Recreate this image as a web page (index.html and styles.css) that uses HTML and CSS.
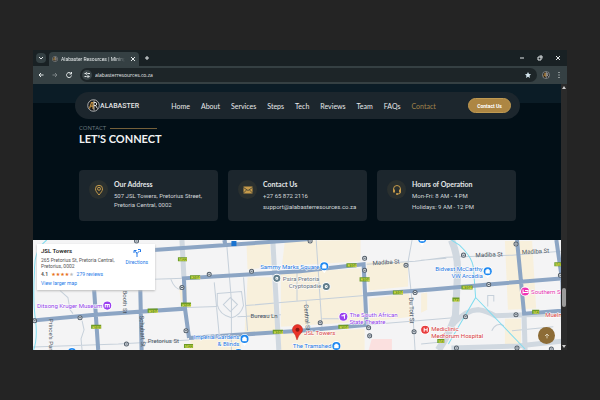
FILE: index.html
```html
<!DOCTYPE html>
<html lang="en">
<head>
<meta charset="utf-8">
<title>Alabaster Resources | Contact</title>
<link rel="stylesheet" href="styles.css">
</head>
<body>

<svg width="0" height="0" class="defs">
	<defs>
		<symbol id="mark" viewBox="0 0 26 26">
			<circle cx="13" cy="13" r="11.5" fill="#17191b" stroke="#dcdcdc" stroke-width="1.5"/>
			<path d="M5 19 L9 7 H12 V20 M7 14 H12" fill="none" stroke="#c08f42" stroke-width="2.5"/>
			<path d="M14 3 V23" fill="none" stroke="#eee" stroke-width="1.5"/>
			<path d="M14 7 H18 Q21 10 18 13 H14 M17 13 L21 19" fill="none" stroke="#ddd" stroke-width="2"/>
		</symbol>
		<symbol id="stop" viewBox="0 0 6 6">
			<circle cx="3" cy="3" r="2" fill="#e8edf2" stroke="#56616c" stroke-width="1"/>
			<path d="M2 3 H4" stroke="#56616c" stroke-width="1"/>
		</symbol>
		<symbol id="shop" viewBox="0 0 10 12">
			<path d="M5 12 L2 8 A4.5 4.5 0 1 1 8 8 Z" fill="#fff"/>
			<circle cx="5" cy="5" r="4" fill="#1a86f0"/>
			<path d="M3 4 H7 V7 H3 Z M4 4 V3 H6 V4" fill="#fff" stroke="#fff" stroke-width=".5"/>
		</symbol>
	</defs>
</svg>

<div class="window">
	<div class="tabs">
		<button class="tab-menu" aria-label="Search tabs"><svg viewBox="0 0 10 10"><path d="M3 4 L5 6 L7 4"/></svg></button>
		<div class="tab">
			<svg class="tab-icon"><use href="#mark"/></svg>
			<span class="tab-title">Alabaster Resources | Mining E</span>
			<button aria-label="Close tab"><svg viewBox="0 0 10 10"><path d="M3 3 L7 7 M7 3 L3 7"/></svg></button>
		</div>
		<button class="new-tab" aria-label="New tab"><svg viewBox="0 0 10 10"><path d="M5 3 V7 M3 5 H7"/></svg></button>
		<div class="window-buttons">
			<button aria-label="Minimize"><svg viewBox="0 0 10 10"><path d="M3 5 H7"/></svg></button>
			<button aria-label="Restore"><svg viewBox="0 0 10 10"><path d="M3 4 H6 V7 H3 Z M4.500 3 H7 V5.500"/></svg></button>
			<button aria-label="Close"><svg viewBox="0 0 10 10"><path d="M3 3 L7 7 M7 3 L3 7"/></svg></button>
		</div>
	</div>
	<div class="toolbar">
		<button aria-label="Back"><svg viewBox="0 0 10 10"><path d="M7.500 5 H3 M5 3 L3 5 L5 7"/></svg></button>
		<button class="dim" aria-label="Forward"><svg viewBox="0 0 10 10"><path d="M2.500 5 H7 M5 3 L7 5 L5 7"/></svg></button>
		<button aria-label="Reload"><svg viewBox="0 0 10 10"><path d="M7 3.500 A2.500 2.500 0 1 0 7.500 5.500 M7.500 2 V4 H5.500"/></svg></button>
		<div class="omnibox">
			<span class="site-info"><svg viewBox="0 0 10 10"><path d="M2.500 3.500 H4 M6 3.500 H8 M2.500 6.500 H4.500 M6.500 6.500 H7.500"/><circle cx="4.500" cy="3.500" r=".8"/><circle cx="6" cy="6.500" r=".8"/></svg></span>
			<input type="text" aria-label="Address" value="alabasterresources.co.za">
			<svg class="star" viewBox="0 0 10 10"><path d="M5 2 L6 4 L8 4.200 L6.500 5.700 L7 8 L5 6.800 L3 8 L3.500 5.700 L2 4.200 L4 4 Z"/></svg>
		</div>
		<button aria-label="Profile"><svg class="profile"><use href="#mark"/></svg></button>
		<button aria-label="Menu"><svg viewBox="0 0 10 10"><path d="M5 2 V3 M5 4.500 V5.500 M5 7 V8"/></svg></button>
	</div>

	<div class="view">
		<div class="page">
			<header class="header">
				<nav class="nav">
					<a href="#" class="logo"><svg><use href="#mark"/></svg>ALABASTER</a>
					<div class="links">
						<a href="#">Home</a>
						<a href="#">About</a>
						<a href="#">Services</a>
						<a href="#">Steps</a>
						<a href="#">Tech</a>
						<a href="#">Reviews</a>
						<a href="#">Team</a>
						<a href="#">FAQs</a>
						<a href="#" class="active">Contact</a>
					</div>
					<button class="contact-btn">Contact Us</button>
				</nav>
			</header>

			<section class="contact">
				<p class="eyebrow">CONTACT</p>
				<h1>LET'S CONNECT</h1>
				<div class="cards">
					<div class="card">
						<span class="card-icon"><svg viewBox="0 0 12 12"><path d="M6 11 C4 8.500 2.500 7 2.500 4.800 A3.500 3.500 0 0 1 9.500 4.800 C9.500 7 8 8.500 6 11 Z"/><circle cx="6" cy="4.800" r="1.500"/></svg></span>
						<div>
							<h2>Our Address</h2>
							<p>507 JSL Towers, Pretorius Street, Pretoria Central, 0002</p>
						</div>
					</div>
					<div class="card">
						<span class="card-icon"><svg viewBox="0 0 12 12"><path class="fill" d="M1.500 2.500 H10.500 V9.500 H1.500 Z"/><path class="cut" d="M1.500 3.500 L6 6.500 L10.500 3.500 M1.500 9 L4.500 6 M10.500 9 L7.500 6"/></svg></span>
						<div>
							<h2>Contact Us</h2>
							<p>+27 65 872 2116</p>
							<p>support@alabasterresources.co.za</p>
						</div>
					</div>
					<div class="card">
						<span class="card-icon"><svg viewBox="0 0 12 12"><path d="M2.500 6.500 V5 A3.500 3.500 0 0 1 9.500 5 V8 Q9.500 10 7 10 H6"/><path class="fill" d="M2 5.500 H4 V8.500 H2 Z M8 5.500 H10 V8.500 H8 Z M5 9.200 H7 V10.800 H5 Z"/></svg></span>
						<div>
							<h2>Hours of Operation</h2>
							<p>Mon-Fri: 8 AM - 4 PM</p>
							<p>Holidays: 9 AM - 12 PM</p>
						</div>
					</div>
				</div>
			</section>

			<section class="map">
				<svg class="map-canvas" viewBox="33 240 528 109" preserveAspectRatio="xMidYMid slice">
					<rect x="33" y="240" width="528" height="109" fill="#f4f4f5"/>

					<!-- built up blocks -->
					<g fill="#f8f0dc">
						<path d="M247 245 L270 243 L272 267 L248 269 Z M180 287 L188 286 V300 L182 301 Z M248 277 H272 L276 330 L245 332 L247 300 Z M192 338 L240 336 L242 349 H190 Z"/>
						<path d="M281 273 L360 268 L364 321 L281 326 Z M285 241 L360 240 V261 L282 266 Z M366 262 L407 262 L407 286 L368 290 Z M368 298 L408 293 L410 316 L369 321 Z M281 333 L364 328 V349 H281 Z"/>
						<path d="M503 241 H530 L534 308 L506 309 Z M420 293 L426 292 V309 L420 312 Z M503 318 H519 V346 H503 Z"/>
					</g>
					<path d="M371 338 H391 V349 H368 Z" fill="#fbe0df"/>

					<g class="street">
						<path d="M62 290 L70 297 L72 309 L75 313 M84 320 L86 329 L83 338 L84 349 M33 346 L120 343 L190 339 M155 279 L185 278 M172 279 Q176 289 182 289"/>
						<path d="M227 240 L232 300 V349 M215 282 L220 335 M244 277 L248 330 M188 307 L218 306 M238 316 L281 314 M246 305 L281 302 L364 295 M316 240 L322 330 M297 270 V300 M306 300 L308 327 M322 318 H344 M411 240 L407 262 L411 300 L414 349"/>
						<path d="M366 264 L414 261 L430 259 L445 257 L510 255 L561 251 M420 260 L445 258 M368 324 L452 317 M486 306 V295 H492 V301 M490 330 Q494 321 502 325 M510 330 L551 326 M420 343 L440 341"/>
						<path d="M218 293 L242 291 L244 305 Q241 315 232 317 Q220 314 218 304 Z M224 304 L231 297 L238 304 L231 311 Z" fill="none"/>
					</g>
					<g class="avenue">
						<path d="M183 240 L185 278 M273 240 L279 349"/>
						<path d="M450 240 Q457 255 456 275 L454 315 Q447 335 437 349" stroke-width="7"/>
						<path d="M452 323 Q465 309 477 309 Q485 310 493 315 L561 313 M450 347 L516 345 L561 340 M522 314 L523 349"/>
					</g>
					<g class="river">
						<path d="M49 240 Q36 250 37 270 Q35 300 38 320 Q40 338 36 349"/>
						<path d="M450 240 L458 245 Q472 258 472 270 L474 297 L447 343 M474 297 L523 348"/>
					</g>
					<g class="highway">
						<path d="M33 320 L97 314 L186 308 M96 255 L96 290 L100 349 M141 255 L143 349"/>
						<path d="M155 250 L283 241 L310 239 M225 240 L226 245"/>
						<path d="M190 337 L186 308 L185 278 L300 271 L363 264 L366 325 M190 337 L300 330 L368 324"/>
						<path d="M365 294 L430 289 L487 284 L561 278 M515 240 L522 313 L561 310 M554 240 L560 282 L561 349"/>
					</g>
					<g fill="#6d9a25">
						<path d="M179 257 h9 v4 h-9 Z M191 275 h10 v4 h-10 Z M182 302 h10 v4 h-10 Z M149 308 h10 v4 h-10 Z M93 324 h10 v4 h-10 Z M185 343 h9 v4 h-9 Z M273 329 h10 v4 h-10 Z M346 263 h10 v4 h-10 Z M359 277 h10 v4 h-10 Z M392 290 h10 v4 h-10 Z M338 324 h10 v4 h-10 Z M460 285 h11 v4 h-11 Z M451 297 h7 v4 h-7 Z M530 309 h7 v4 h-7 Z M552 262 h7 v4 h-7 Z M436 338 h7 v4 h-7 Z"/>
					</g>
					<g class="shield">
						<text x="180" y="261">M22</text><text x="192" y="279">R104</text><text x="183" y="306">R104</text><text x="150" y="312">R104</text><text x="94" y="328">R101</text><text x="186" y="347">M22</text><text x="274" y="333">R104</text><text x="347" y="267">R104</text><text x="360" y="281">R104</text><text x="393" y="294">R104</text><text x="339" y="328">R104</text><text x="461" y="289">R104</text><text x="452" y="301">M3</text><text x="531" y="313">M2</text><text x="553" y="266">M5</text><text x="437" y="342">M3</text>
					</g>

					<use href="#stop" x="34" y="317" width="6" height="6"/>
					<use href="#stop" x="79" y="314" width="6" height="6"/>
					<use href="#stop" x="125" y="340" width="6" height="6"/>
					<use href="#stop" x="135" y="238" width="6" height="6"/>
					<use href="#stop" x="207" y="271" width="6" height="6"/>
					<use href="#stop" x="249" y="268" width="6" height="6"/>
					<use href="#stop" x="180" y="284" width="6" height="6"/>
					<use href="#stop" x="184" y="327" width="6" height="6"/>
					<use href="#stop" x="307" y="238" width="6" height="6"/>
					<use href="#stop" x="361" y="255" width="6" height="6"/>
					<use href="#stop" x="361" y="267" width="6" height="6"/>
					<use href="#stop" x="402" y="262" width="6" height="6"/>
					<use href="#stop" x="411" y="289" width="6" height="6"/>
					<use href="#stop" x="317" y="319" width="6" height="6"/>
					<use href="#stop" x="365" y="324" width="6" height="6"/>
					<use href="#stop" x="366" y="332" width="6" height="6"/>
					<use href="#stop" x="410" y="328" width="6" height="6"/>
					<use href="#stop" x="459" y="252" width="6" height="6"/>
					<use href="#stop" x="484" y="281" width="6" height="6"/>
					<use href="#stop" x="461" y="313" width="6" height="6"/>
					<use href="#stop" x="511" y="311" width="6" height="6"/>
					<use href="#stop" x="511" y="241" width="6" height="6"/>
					<use href="#stop" x="555" y="272" width="6" height="6"/>
					<use href="#stop" x="452" y="344" width="6" height="6"/>
					<use href="#stop" x="512" y="344" width="6" height="6"/>
					<use href="#stop" x="546" y="345" width="6" height="6"/>
					<rect x="232" y="241" width="5" height="5" fill="#1a73d0"/>

					<g class="road-name">
						<text x="149" y="342">Pretorius St</text>
						<text x="251" y="317">Bureau Ln</text>
						<text x="372" y="265" transform="rotate(-4 372 265)">Madiba St</text>
						<text x="474" y="257" transform="rotate(-2 474 257)">Madiba St</text>
						<text x="520" y="254" transform="rotate(-3 520 254)">Madiba St</text>
						<text x="51" y="318" transform="rotate(90 51 318)">Prince's Par</text>
						<text x="141" y="315" transform="rotate(87 141 315)">Schubart St</text>
						<text x="125" y="290" transform="rotate(90 125 290)">Booth St</text>
						<text x="304" y="304" transform="rotate(86 304 304)">Central St</text>
						<text x="408" y="297" transform="rotate(88 408 297)">Du Toit St</text>
					</g>
					<g class="place blue before-pin">
						<text x="319" y="269">Sammy Marks Square</text>
						<text x="240" y="338">Imperial Gardens</text>
						<text x="240" y="345">&amp; Blinds</text>
						<text x="331" y="347">The Tramshed</text>
						<text x="481" y="271">Bidvest McCarthy</text>
						<text x="481" y="278">VW Arcadia</text>
					</g>
					<g class="place grey">
						<text x="283" y="281">Psira Pretoria</text>
						<text class="before-pin" x="321" y="288">Cryptopadie</text>
					</g>
					<g class="place purple">
						<text class="before-pin" x="104" y="307">Ditsong Kruger Museum</text>
						<text x="349" y="316">The South African</text>
						<text x="349" y="323">State Theatre</text>
					</g>
					<g class="place red">
						<text x="304" y="334">JSL Towers</text>
						<text x="430" y="330">Mediclinic</text>
						<text x="430" y="337">Medforum Hospital</text>
						<text x="543" y="316">Muelm</text>
					</g>
					<text class="place pink" x="529" y="294">Southern Su</text>

					<use href="#shop" x="319" y="261" width="10" height="12"/>
					<use href="#shop" x="240" y="333" width="10" height="12"/>
					<use href="#shop" x="331" y="340" width="10" height="12"/>
					<use href="#shop" x="481" y="266" width="10" height="12"/>
					<use href="#shop" x="416" y="234" width="10" height="12"/>
					<use href="#shop" x="69" y="346" width="10" height="12"/>
					<use href="#shop" x="234" y="347" width="10" height="12"/>
					<g stroke="#fff">
						<circle cx="277" cy="278" r="4" fill="#607d8b"/>
						<circle cx="326" cy="286" r="4" fill="#607d8b"/>
						<circle cx="109" cy="305" r="4.500" fill="#9a3ff0"/>
						<circle cx="343" cy="316" r="4.500" fill="#9a3ff0"/>
						<circle cx="424" cy="329" r="4.500" fill="#e83c3c"/>
						<circle cx="523" cy="291" r="4.500" fill="#f032b4"/>
					</g>
					<g fill="none" stroke="#fff" stroke-width="1">
						<circle cx="277" cy="278" r="1"/>
						<circle cx="326" cy="286" r="1"/>
						<path d="M107 307 V304 H111 V307 M109 304 V307 M341 315 H344 V318 M343 314 H345 M423 327 V331 M426 327 V331 M423 329 H426 M521 289 V293 M521 292 H526 V290 H523"/>
					</g>
					<path d="M297 339 Q296 334 293 331 A5 5 0 1 1 302 331 Q298 335 297 339 Z" fill="#ea3328" stroke="#b9211b" stroke-width=".5"/>
					<circle cx="297.500" cy="329" r="2" fill="#8a1812"/>
				</svg>

				<div class="place-card">
					<div>
						<h3>JSL Towers</h3>
						<p>265 Pretorius St, Pretoria Central, Pretorius, 0002</p>
						<p class="rating"><b>4.1</b><span class="stars">★★★★<i>★</i></span><a href="#">279 reviews</a></p>
						<a href="#">View larger map</a>
					</div>
					<a href="#" class="directions"><svg viewBox="0 0 10 10"><path d="M5 9 V5 L2.500 3 M5 5.500 L7.500 3 M2 5 V2.500 H4.500 M6 1.500 H8.500 V4"/></svg>Directions</a>
				</div>
				<button class="to-top" aria-label="Back to top"><svg viewBox="0 0 10 10"><path d="M5 8 V2.500 M2.500 5 L5 2.500 L7.500 5"/></svg></button>
			</section>
		</div>
		<div class="scrollbar"><span class="arrow-up"></span><span class="thumb"></span><span class="arrow-down"></span></div>
	</div>
</div>

</body>
</html>
```
FILE: styles.css
```css
* {
	box-sizing: border-box;
}
body {
	margin: 0;
	padding: 50px 33px;
	background-color: #242424;
	font-family: Roboto, sans-serif;
	font-size: 6px;
	line-height: 8px;
	color: #d3d7da;
}
h1, h2, h3, p {
	margin: 0;
}
a {
	color: inherit;
	text-decoration: none;
}
button {
	display: flex;
	align-items: center;
	justify-content: center;
	padding: 0;
	border: none;
	background: none;
	color: inherit;
	cursor: pointer;
}
svg {
	display: block;
	flex: none;
}
.defs {
	position: absolute;
}

/* browser frame */
.window {
	background-color: #192124;
}
.tabs, .toolbar {
	display: flex;
	align-items: center;
}
.tabs svg, .toolbar svg {
	width: 10px;
	height: 10px;
	fill: none;
	stroke: #e3e8e9;
	stroke-width: 1;
}
.tabs {
	height: 16px;
	padding-left: 3px;
}
.tab-menu {
	width: 10px;
	height: 10px;
	border-radius: 4px;
	background-color: #344043;
}
.tab {
	display: flex;
	align-items: center;
	align-self: flex-end;
	gap: 3px;
	width: 90px;
	height: 14px;
	margin-left: 3px;
	padding: 0 1px 0 3px;
	border-radius: 4px 4px 0 0;
	background-color: #354043;
}
.tabs .tab-icon, .toolbar .profile {
	width: 6px;
	height: 6px;
	stroke: none;
}
.tab-title {
	flex: 1;
	min-width: 0;
	white-space: nowrap;
	font-size: 5px;
	color: #e6eaeb;
	-webkit-mask-image: linear-gradient(90deg, #000 85%, transparent);
}
.new-tab {
	margin-left: 3px;
}
.window-buttons {
	display: flex;
	gap: 8px;
	margin-left: auto;
	padding-right: 4px;
}
.toolbar {
	height: 18px;
	padding: 0 3px;
	gap: 4px;
	background-color: #354043;
}
.toolbar .dim {
	opacity: .4;
}
.omnibox {
	display: flex;
	align-items: center;
	flex: 1;
	height: 14px;
	margin: 0 1px 0 2px;
	padding: 0 4px 0 2px;
	border-radius: 7px;
	background-color: #1d2528;
}
.site-info {
	border-radius: 50%;
	background-color: #3a4548;
}
.omnibox input {
	flex: 1;
	min-width: 0;
	padding: 0 3px;
	border: none;
	outline: none;
	background: none;
	font-family: "Open Sans", sans-serif;
	font-size: 5px;
	color: #e6eaeb;
}
.toolbar .star {
	fill: #d5e6ee;
	stroke: none;
}
.toolbar .profile {
	width: 8px;
	height: 8px;
}

/* site */
.view {
	display: flex;
}
.page {
	flex: 1;
	min-width: 0;
	background-color: #020f17;
}
.header {
	padding: 8px 41px 0 42px;
	background: linear-gradient(#0b1c26 19px, #020f17 19px);
}
.nav {
	display: flex;
	align-items: center;
	justify-content: space-between;
	height: 27px;
	padding: 0 9px 0 12px;
	border-radius: 14px;
	background-color: #1c262d;
}
.logo {
	display: flex;
	align-items: center;
	font-size: 7px;
	font-weight: 500;
	color: #e4e4e4;
}
.logo svg {
	width: 13px;
	height: 13px;
}
.links {
	display: flex;
	gap: 11px;
	font-family: Lato, sans-serif;
	font-size: 7px;
	color: #e8e9ea;
}
.links .active {
	color: #a1844c;
}
.contact-btn {
	width: 43px;
	height: 15px;
	border: 1px solid #c09a52;
	border-radius: 8px;
	background-color: #ad8643;
	font-family: Roboto, sans-serif;
	font-size: 5px;
	font-weight: bold;
	white-space: nowrap;
	color: #fff;
}
.contact {
	padding: 5px 45px 19px 46px;
}
.eyebrow {
	display: flex;
	align-items: center;
	gap: 4px;
	font-family: "Open Sans", sans-serif;
	font-size: 6px;
	color: #6e7b82;
}
.eyebrow::after {
	content: "";
	width: 47px;
	height: 1px;
	background-color: #75603a;
}
h1 {
	font-family: Lato, sans-serif;
	font-size: 11px;
	font-weight: bold;
	line-height: 13px;
	color: #f1f3f4;
}
.cards {
	display: grid;
	grid-template-columns: repeat(3, 1fr);
	gap: 10px;
	margin-top: 25px;
}
.card {
	display: flex;
	gap: 6px;
	min-height: 51px;
	padding: 10px;
	border-radius: 4px;
	background-color: #1c262d;
}
.card h2 {
	margin-bottom: 3px;
	font-family: Lato, sans-serif;
	font-size: 7px;
	font-weight: bold;
	color: #e3e6e8;
}
.card p {
	line-height: 9px;
}
.card p + p {
	margin-top: 2px;
}
.card-icon {
	display: flex;
	align-items: center;
	justify-content: center;
	flex: none;
	width: 19px;
	height: 19px;
	border-radius: 50%;
	background-color: #2a302f;
}
.card-icon svg {
	width: 12px;
	height: 12px;
	fill: none;
	stroke: #c69b4b;
}
.card-icon .fill {
	fill: #c69b4b;
	stroke: none;
}
.card-icon .cut {
	stroke: #2a302f;
	stroke-width: .7;
}

/* map */
.map {
	position: relative;
	height: 110px;
	overflow: hidden;
}
.map-canvas {
	width: 100%;
	height: 100%;
}
.street, .avenue, .highway, .river {
	fill: none;
	stroke: #c6d0da;
	stroke-width: 1;
}
.avenue {
	stroke: #d0d8e0;
	stroke-width: 5;
}
.highway {
	stroke: #8ca5c4;
	stroke-width: 4;
}
.river {
	stroke: #80dcef;
}
.shield {
	font-size: 4px;
	fill: #f4ee60;
}
.road-name {
	font-size: 6px;
	fill: #4b5561;
}
.place {
	font-size: 6px;
	paint-order: stroke;
	stroke: #fff;
	stroke-width: 1;
}
.before-pin {
	text-anchor: end;
}
.blue { fill: #2275e0; }
.grey { fill: #66727c; }
.purple { fill: #9140e8; }
.red { fill: #d63c3c; }
.pink { fill: #e32fae; }
.place-card {
	position: absolute;
	top: 4px;
	left: 4px;
	display: flex;
	justify-content: space-between;
	width: 118px;
	height: 46px;
	padding: 3px 7px 0 4px;
	background-color: #fff;
	box-shadow: 0 1px 2px #bbb;
	font-size: 5px;
	line-height: 6px;
	color: #555;
}
.place-card h3 {
	margin-bottom: 2px;
	font-size: 6px;
	line-height: 8px;
	font-weight: 500;
	color: #111;
}
.place-card a {
	color: #2379e8;
}
.place-card div {
	width: 74px;
}
.place-card .rating {
	display: flex;
	gap: 3px;
	margin: 1px 0 2px;
	line-height: 8px;
	white-space: nowrap;
}
.stars {
	font-family: "DejaVu Sans", sans-serif;
	color: #e7711b;
}
.stars i {
	font-style: normal;
	color: #bbb;
}
.directions {
	display: flex;
	flex-direction: column;
	align-items: center;
	padding-top: 1px;
}
.directions svg {
	width: 10px;
	height: 10px;
	margin-bottom: 1px;
	fill: none;
	stroke: #2379e8;
}
.to-top {
	position: absolute;
	right: 6px;
	bottom: 6px;
	width: 17px;
	height: 17px;
	border-radius: 50%;
	background-color: #8d6c36;
}
.to-top svg {
	width: 8px;
	height: 8px;
	fill: none;
	stroke: #e9dfc9;
}
.scrollbar {
	display: flex;
	flex-direction: column;
	align-items: center;
	width: 6px;
	padding: 2px 0;
	background-color: #2b2b2b;
}
.scrollbar .thumb {
	width: 4px;
	height: 19px;
	margin: auto 0 38px;
	border-radius: 2px;
	background-color: #9b9b9b;
}
.arrow-up, .arrow-down {
	border: 2px solid transparent;
}
.arrow-up {
	border-top: none;
	border-bottom: 3px solid #ccc;
}
.arrow-down {
	border-bottom: none;
	border-top: 3px solid #ccc;
}
```
